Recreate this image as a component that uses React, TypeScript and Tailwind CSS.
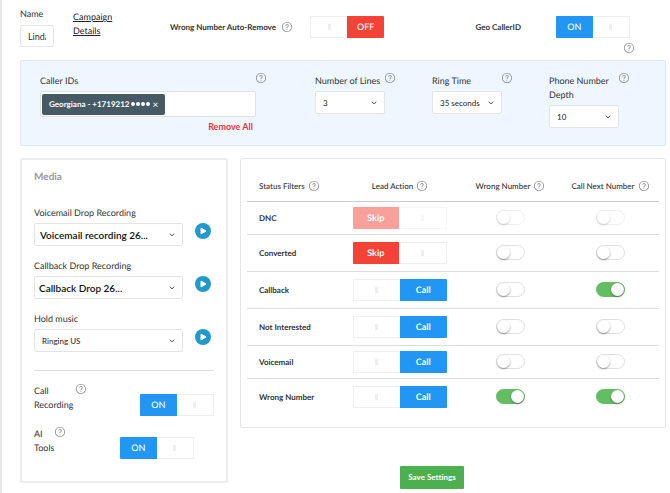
import { useState } from 'react'
import type { ReactNode } from 'react'
import clsx from 'clsx'
import { SlQuestion } from 'react-icons/sl'

const statusFilters = [
  { name: 'DNC', action: 'skip', wrong: false, next: false, disabled: true, height: 'h-8' },
  { name: 'Converted', action: 'skip', wrong: false, next: false, disabled: false, height: 'h-9' },
  { name: 'Callback', action: 'call', wrong: false, next: true, disabled: false, height: 'h-9' },
  { name: 'Not Interested', action: 'call', wrong: false, next: false, disabled: false, height: 'h-9' },
  { name: 'Voicemail', action: 'call', wrong: false, next: false, disabled: false, height: 'h-8' },
  { name: 'Wrong Number', action: 'call', wrong: true, next: true, disabled: false, height: 'h-9' },
]

function Help({ label }: { label: string }) {
  return (
    <button type="button" aria-label={`Help: ${label}`} className="flex size-[10px] shrink-0 text-[#777]">
      <SlQuestion size={10} />
    </button>
  )
}

type SegmentProps = {
  label: string
  on: boolean
  onText: string
  offText: string
  // which side holds the text of the "on" state
  onSide?: 'left' | 'right'
  wide?: boolean
  disabled?: boolean
}

function Segment({ label, on, onText, offText, onSide = 'left', wide, disabled }: SegmentProps) {
  const [checked, setChecked] = useState(on)
  const left = checked === (onSide === 'left')
  const filled = (
    <span
      className={clsx(
        'flex flex-1 items-center justify-center text-white',
        wide ? 'font-bold' : 'font-medium',
        checked ? 'bg-[#2196f3]' : 'bg-[#f44336]',
      )}
    >
      {checked ? onText : offText}
    </span>
  )
  const empty = (
    <span className={clsx('flex flex-1 items-center justify-center border border-[#eee] bg-white', left ? 'border-l-0' : 'border-r-0')}>
      <span className="h-[6px] w-[3px] bg-[#eee]" />
    </span>
  )

  return (
    <label
      className={clsx(
        'relative flex h-[22px] shrink-0 overflow-hidden rounded-[1px] text-[9px]',
        wide ? 'w-[94px]' : 'w-[74px]',
        disabled && 'opacity-50',
      )}
    >
      <input
        type="checkbox"
        aria-label={label}
        className="sr-only"
        checked={checked}
        disabled={disabled}
        onChange={e => setChecked(e.target.checked)}
      />
      {left ? filled : empty}
      {left ? empty : filled}
    </label>
  )
}

function Switch({ label, on, disabled }: { label: string; on: boolean; disabled?: boolean }) {
  const [checked, setChecked] = useState(on)

  return (
    <label
      className={clsx(
        'relative mx-auto flex h-[15px] w-[29px] items-center rounded-full border',
        checked ? 'justify-end border-[#64bd63] bg-[#64bd63]' : 'border-[#dfdfdf] bg-white',
        disabled && 'opacity-50',
      )}
    >
      <input
        type="checkbox"
        role="switch"
        aria-label={label}
        className="sr-only"
        checked={checked}
        disabled={disabled}
        onChange={e => setChecked(e.target.checked)}
      />
      <span className="size-[13px] rounded-full bg-white shadow-[0_1px_2px_rgba(0,0,0,0.4)]" />
    </label>
  )
}

function Select({ id, value, className }: { id: string; value: string; className?: string }) {
  return (
    <div className="relative">
      <select
        id={id}
        className={clsx(
          'block h-[23px] w-full appearance-none rounded-[2px] border border-[#e2e4e6] bg-white pr-4 outline-none',
          className ?? 'pl-[7px] text-[8px] font-medium text-[#333]',
        )}
      >
        <option>{value}</option>
      </select>
      <svg viewBox="0 0 6 4" className="pointer-events-none absolute top-[10px] right-2 h-1 w-[6px]" fill="none" stroke="#444">
        <path d="M0.8 0.7 L3 2.9 L5.2 0.7" />
      </svg>
    </div>
  )
}

function Field({ id, label, value, children }: { id: string; label: ReactNode; value: string; children?: ReactNode }) {
  return (
    <div className="w-20">
      <div className="mb-[3px] flex items-start justify-between">
        <label htmlFor={id} className="pt-px whitespace-nowrap">
          {label}
        </label>
        {children}
      </div>
      <div className="w-[70px]">
        <Select id={id} value={value} />
      </div>
    </div>
  )
}

function Recording({ id, label, value, className }: { id: string; label: string; value: string; className?: string }) {
  return (
    <div className="mb-[13px]">
      <label htmlFor={id} className="mb-[3px] block">
        {label}
      </label>
      <div className="flex items-start gap-3">
        <div className="flex-1">
          <Select id={id} value={value} className={className} />
        </div>
        <button type="button" aria-label={`Play ${label}`} className="mr-[3px] size-4">
          <svg viewBox="0 0 16 16" className="size-4">
            <circle cx="8" cy="8" r="8" fill="#2299cc" />
            <path d="M6 5 L11 8 L6 11 Z" fill="#fff" stroke="#fff" strokeLinejoin="round" />
          </svg>
        </button>
      </div>
    </div>
  )
}

export default function App() {
  return (
    <div className="min-h-screen border-l-2 border-[#e8e8e8] bg-white pr-1 pl-[18px] font-['Lato',sans-serif] text-[9px] leading-[14px] font-normal text-[#333] [font-variant-ligatures:none] [text-rendering:geometricPrecision]">
      <header className="flex h-[60px] items-start">
        <div className="w-[53px] pt-[7px]">
          <label htmlFor="name" className="block">
            Name
          </label>
          <input
            id="name"
            defaultValue="Linda"
            className="mt-1 block h-[22px] w-[34px] rounded-[2px] border border-[#e2e4e6] px-[7px] text-[9px] outline-none"
          />
        </div>
        <a href="#details" className="w-[60px] pt-[10px] text-[#222] underline">
          Campaign Details
        </a>
        <div className="ml-[37px] flex items-center pt-4">
          <span className="mr-[6px] text-[8px] font-bold whitespace-nowrap">Wrong Number Auto-Remove</span>
          <Help label="Wrong Number Auto-Remove" />
          <div className="ml-[18px]">
            <Segment label="Wrong Number Auto-Remove" on={false} onText="ON" offText="OFF" />
          </div>
        </div>
        <div className="mr-8 ml-auto flex flex-col items-end pt-4">
          <div className="flex items-center gap-[35px] pr-[4px]">
            <span className="text-[8px] font-bold">Geo CallerID</span>
            <Segment label="Geo CallerID" on onText="ON" offText="OFF" />
          </div>
          <div className="mt-[5px]">
            <Help label="Geo CallerID" />
          </div>
        </div>
      </header>

      <section className="flex h-[86px] items-start justify-between rounded-[2px] border border-[#dfe6ec] bg-[#eef7ff] pt-3 pr-9 pl-[19px]">
        <div className="w-[238px] pr-3">
          <div className="mb-[3px] flex justify-between">
            <span className="pt-px">Caller IDs</span>
            <Help label="Caller IDs" />
          </div>
          <div className="flex h-[26px] w-[216px] items-center rounded-[2px] border border-[#dfe3e6] bg-white px-[1px]">
            <span className="flex h-[21px] items-center gap-[2px] rounded-[2px] bg-[#455a64] px-[7px] text-[8px] font-bold whitespace-nowrap text-white">
              Georgiana - +1719212
              <span className="flex gap-[1px]">
                {[0, 1, 2, 3].map(dot => (
                  <span key={dot} className="size-1 rounded-full bg-white" />
                ))}
              </span>
              <button type="button" aria-label="Remove Georgiana" className="text-[10px] font-normal">
                ×
              </button>
            </span>
          </div>
          <div className="mt-[3px] pr-[13px] text-right text-[9px] font-bold text-[#f03333]">
            <button type="button">Remove All</button>
          </div>
        </div>
        <Field id="lines" label="Number of Lines" value="3">
          <Help label="Number of Lines" />
        </Field>
        <Field id="ring" label="Ring Time" value="35 seconds">
          <Help label="Ring Time" />
        </Field>
        <Field
          id="depth"
          label={
            <>
              Phone Number
              <br />
              Depth
            </>
          }
          value="10"
        >
          <Help label="Phone Number Depth" />
        </Field>
      </section>

      <div className="mt-3 flex items-start gap-3">
        <section className="w-[208px] shrink-0 rounded-[2px] border-2 border-[#eee] px-3 pt-[10px] pb-[22px]">
          <h2 className="mb-[22px] text-[10px] font-bold text-[#999]">Media</h2>
          <Recording
            id="voicemail"
            label="Voicemail Drop Recording"
            value="Voicemail recording 26..."
            className="pl-[5px] text-[10px] font-semibold text-[#111]"
          />
          <Recording
            id="callback"
            label="Callback Drop Recording"
            value="Callback Drop 26..."
            className="pl-1 text-[10px] font-semibold text-[#111]"
          />
          <Recording id="hold" label="Hold music" value="Ringing US" />
          <hr className="mt-[18px] border-[#ddd]" />
          <div className="mt-[13px] flex items-start">
            <span className="w-[42px]">Call Recording</span>
            <Help label="Call Recording" />
            <div className="mt-[10px] ml-auto">
              <Segment label="Call Recording" on onText="ON" offText="OFF" />
            </div>
          </div>
          <div className="mt-[11px] flex items-start pr-5">
            <span className="w-[21px]">AI Tools</span>
            <Help label="AI Tools" />
            <div className="mt-[10px] ml-auto">
              <Segment label="AI Tools" on onText="ON" offText="OFF" />
            </div>
          </div>
        </section>

        <div className="flex min-w-0 flex-1 flex-col">
          <section className="rounded-[2px] border border-[#e6e6e6] px-[6px] pb-3">
            <table className="w-full table-fixed border-collapse text-[8px]">
              <colgroup>
                <col className="w-[93px]" />
                <col className="w-[119px]" />
                <col className="w-[102px]" />
                <col className="w-[98px]" />
              </colgroup>
              <thead>
                <tr className="h-[42px] border-b border-[#ccc]">
                  {['Status Filters', 'Lead Action', 'Wrong Number', 'Call Next Number'].map((title, i) => (
                    <th key={title} scope="col" className={clsx('pt-3 font-medium', i === 0 && 'pl-3')}>
                      <div className={clsx('flex items-center gap-1 whitespace-nowrap', i > 0 && 'justify-center')}>
                        {title}
                        <Help label={title} />
                      </div>
                    </th>
                  ))}
                </tr>
              </thead>
              <tbody>
                {statusFilters.map(row => (
                  <tr key={row.name} className="border-b border-[#ddd] last:border-b-0">
                    <th scope="row" className="pl-3 text-left font-bold whitespace-nowrap">
                      {row.name}
                    </th>
                    <td>
                      <div className={clsx('flex items-center justify-center', row.height)}>
                        <Segment
                          wide
                          label={`${row.name} lead action`}
                          on={row.action === 'call'}
                          onText="Call"
                          offText="Skip"
                          onSide="right"
                          disabled={row.disabled}
                        />
                      </div>
                    </td>
                    <td>
                      <Switch label={`${row.name}: wrong number`} on={row.wrong} disabled={row.disabled} />
                    </td>
                    <td>
                      <Switch label={`${row.name}: call next number`} on={row.next} disabled={row.disabled} />
                    </td>
                  </tr>
                ))}
              </tbody>
            </table>
          </section>
          <button
            type="button"
            className="mt-[38px] mr-[42px] h-[23px] w-16 self-center rounded-[1px] bg-[#4caf50] text-[8px] font-bold whitespace-nowrap text-white"
          >
            Save Settings
          </button>
        </div>
      </div>
    </div>
  )
}
